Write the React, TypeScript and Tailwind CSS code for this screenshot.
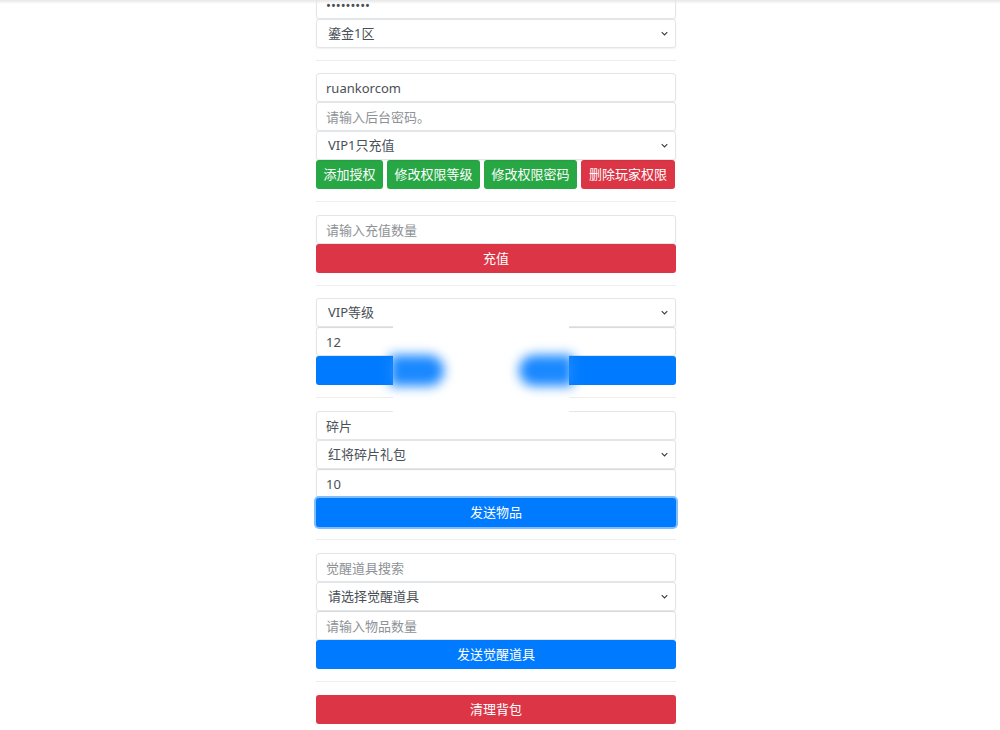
import { ReactNode } from "react";

const font = { fontFamily: '"Noto Sans", "Noto Sans CJK SC", sans-serif' };

const Field = ({ value, placeholder, type = "text" }: { value?: string; placeholder?: string; type?: string }) => (
  <input
    type={type}
    defaultValue={value}
    placeholder={placeholder}
    className="block w-full h-[29px] px-[9px] text-[13px] text-[#495057] placeholder:text-[#8e9296] bg-white border border-[#e3e6e9] rounded-[3px] shadow-[0_1px_2px_rgba(0,0,0,0.06)] outline-none"
  />
);

const Select = ({ value }: { value: string }) => (
  <div className="relative">
    <select
      defaultValue={value}
      className="block w-full h-[29px] pl-[11px] pr-6 text-[13px] text-[#495057] bg-white border border-[#e3e6e9] rounded-[3px] shadow-[0_1px_2px_rgba(0,0,0,0.06)] appearance-none outline-none"
    >
      <option>{value}</option>
    </select>
    <svg
      viewBox="0 0 10 6"
      className="absolute right-[8px] top-[12px] w-[7px] h-[5px] pointer-events-none"
      fill="none"
      stroke="#343a40"
      strokeWidth="1.5"
    >
      <path d="M1 1l4 4 4-4" />
    </svg>
  </div>
);

const Btn = ({ color, width, children }: { color: "green" | "red"; width: string; children?: ReactNode }) => {
  const bg = color === "green" ? "bg-[#28a745]" : "bg-[#dc3545]";
  return (
    <button className={`${bg} ${width} h-[29px] shrink-0 whitespace-nowrap text-[13px] text-white rounded-[3px]`}>
      {children}
    </button>
  );
};

const Wide = ({ color, children, focus }: { color: "red" | "blue"; children?: ReactNode; focus?: boolean }) => {
  const bg = color === "red" ? "bg-[#dc3545]" : "bg-[#007bff]";
  return (
    <button
      className={`${bg} block w-full h-[29px] text-[13px] text-white rounded-[3px] ${focus ? "ring-2 ring-[#80bdff]" : ""}`}
    >
      {children}
    </button>
  );
};

const Rule = ({ wide }: { wide?: boolean }) => (
  <hr className={`mt-[12px] ${wide ? "mb-[13px]" : "mb-[12px]"} border-0 border-t border-[#eeeeee]`} />
);

export default function App() {
  return (
    <div className="relative min-h-[730px] bg-white overflow-hidden" style={font}>
      {/* header shadow */}
      <div className="absolute top-0 left-0 right-0 h-[4px] bg-gradient-to-b from-[#e6e6e6] to-transparent z-10" />

      <div className="w-[360px] ml-[316px] -mt-[10px] pb-[8px]">
        <Field type="password" value="123456789" />
        <Select value="鎏金1区" />
        <Rule />

        <Field value="ruankorcom" />
        <Field placeholder="请输入后台密码。" />
        <Select value="VIP1只充值" />
        <div className="flex gap-[4px]">
          <Btn color="green" width="w-[67px]">添加授权</Btn>
          <Btn color="green" width="w-[93px]">修改权限等级</Btn>
          <Btn color="green" width="w-[93px]">修改权限密码</Btn>
          <Btn color="red" width="w-[94px]">删除玩家权限</Btn>
        </div>
        <Rule wide />

        <Field placeholder="请输入充值数量" />
        <Wide color="red">充值</Wide>
        <Rule />

        <div className="relative">
          <Select value="VIP等级" />
          <Field value="12" />
          <Wide color="blue" />
          {/* masked label */}
          <div className="absolute left-[77px] top-[27px] w-[176px] h-[87px] bg-white" />
          <div className="absolute left-[74px] top-[57px] w-[54px] h-[31px] bg-[#1a88ff] rounded-r-full blur-[6px]" />
          <div className="absolute left-[203px] top-[57px] w-[54px] h-[31px] bg-[#1a88ff] rounded-l-full blur-[6px]" />
        </div>
        <Rule wide />

        <Field value="碎片" />
        <Select value="红将碎片礼包" />
        <Field value="10" />
        <Wide color="blue" focus>发送物品</Wide>
        <Rule wide />

        <Field placeholder="觉醒道具搜索" />
        <Select value="请选择觉醒道具" />
        <Field placeholder="请输入物品数量" />
        <Wide color="blue">发送觉醒道具</Wide>
        <Rule wide />

        <Wide color="red">清理背包</Wide>
      </div>
    </div>
  );
}
